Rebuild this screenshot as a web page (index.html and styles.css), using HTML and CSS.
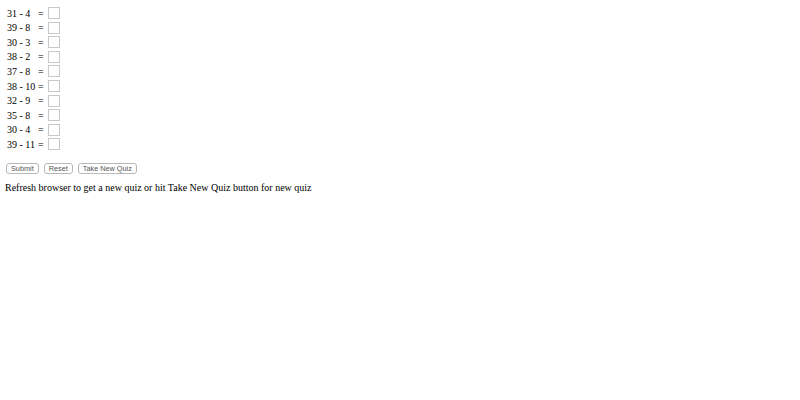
FILE: index.html
```html
<!DOCTYPE html>
<html>
<head>
<meta charset="utf-8">
<link rel="stylesheet" href="styles.css">
</head>
<body>
<div class="quiz">
  <div class="row"><span class="q">31 - 4</span><span class="eq">=</span><span class="box"></span></div>
  <div class="row"><span class="q">39 - 8</span><span class="eq">=</span><span class="box"></span></div>
  <div class="row"><span class="q">30 - 3</span><span class="eq">=</span><span class="box"></span></div>
  <div class="row"><span class="q">38 - 2</span><span class="eq">=</span><span class="box"></span></div>
  <div class="row"><span class="q">37 - 8</span><span class="eq">=</span><span class="box"></span></div>
  <div class="row"><span class="q">38 - 10</span><span class="eq">=</span><span class="box"></span></div>
  <div class="row"><span class="q">32 - 9</span><span class="eq">=</span><span class="box"></span></div>
  <div class="row"><span class="q">35 - 8</span><span class="eq">=</span><span class="box"></span></div>
  <div class="row"><span class="q">30 - 4</span><span class="eq">=</span><span class="box"></span></div>
  <div class="row"><span class="q">39 - 11</span><span class="eq">=</span><span class="box"></span></div>
</div>
<div class="buttons">
  <button class="btn">Submit</button>
  <button class="btn">Reset</button>
  <button class="btn">Take New Quiz</button>
</div>
<p class="note">Refresh browser to get a new quiz or hit Take New Quiz button for new quiz</p>
</body>
</html>
```
FILE: styles.css
```css
html, body {
  margin: 0;
  background: #fff;
}
body {
  font-family: "Liberation Serif", "Times New Roman", serif;
  font-size: 10px;
  color: #000;
  padding: 6px 5px 0 5px;
}
.quiz {
  display: flex;
  flex-direction: column;
  padding-left: 2px;
}
.row {
  display: flex;
  align-items: center;
  height: 14.55px;
}
.q {
  min-width: 31px;
  white-space: nowrap;
}
.eq {
  width: 10px;
}
.box {
  width: 10px;
  height: 10px;
  border: 1px solid #c8c8c8;
  background: #fff;
}
.buttons {
  display: flex;
  gap: 5px;
  margin-top: 12px;
  padding-left: 1px;
}
.btn {
  font-family: "Liberation Sans", Arial, sans-serif;
  font-size: 7.3px;
  color: #555;
  background: #fff;
  border: 1px solid #b8b8b8;
  border-radius: 3px;
  height: 11px;
  padding: 0 4px;
  line-height: 9px;
}
.note {
  margin: 8px 0 0 0;
}
```
